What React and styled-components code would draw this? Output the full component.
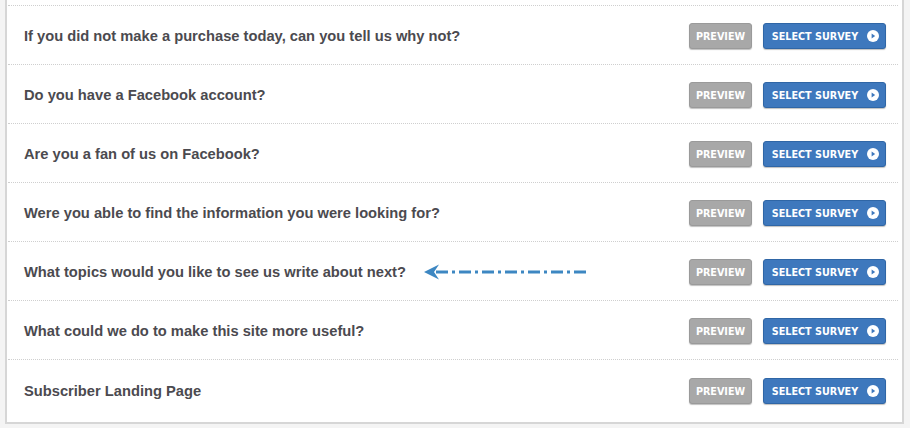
import styled, { createGlobalStyle } from "styled-components";

const GlobalStyle = createGlobalStyle`
  html, body {
    margin: 0;
    padding: 0;
    background: #f4f4f4;
    font-family: "Liberation Sans", Arial, sans-serif;
  }
`;

const Page = styled.div`
  width: 910px;
  height: 428px;
  overflow: hidden;
  padding-left: 5px;
  box-sizing: border-box;
`;

const Panel = styled.div`
  width: 899px;
  box-sizing: border-box;
  background: #fff;
  border: 2px solid #d6d6d6;
  border-top: none;
  padding: 5px 0 2px;
`;

const Row = styled.div`
  display: flex;
  align-items: center;
  height: 59px;
  border-top: 1px dotted #cfcfcf;
  margin: 0 4px 0 1px;
  padding: 0 12px 0 16px;
  box-sizing: border-box;
  ${(p) => p.$last && "height: 61px;"}
`;

const Title = styled.div`
  flex: 1;
  display: flex;
  align-items: center;
  gap: 18px;
  font-size: 14.7px;
  font-weight: bold;
  color: #4b4a4f;
  padding-top: 1px;
`;

const Actions = styled.div`
  display: flex;
  gap: 11px;
  padding-top: 2px;
`;

const Button = styled.button`
  display: flex;
  align-items: center;
  justify-content: center;
  gap: 9px;
  height: 26px;
  width: ${(p) => (p.$primary ? "123px" : "63px")};
  padding: 0 0 0 ${(p) => (p.$primary ? "2px" : "0")};
  border-radius: 3px;
  border: 1px solid ${(p) => (p.$primary ? "#2f66a6" : "#9a9a9a")};
  background: ${(p) => (p.$primary ? "#3e78bd" : "#a8a8a8")};
  color: #fff;
  font-family: "DejaVu Sans", "Liberation Sans", sans-serif;
  font-stretch: condensed;
  font-weight: bold;
  font-size: 10.7px;
  text-transform: uppercase;
  box-shadow: 0 1px 1px rgba(0, 0, 0, 0.25);
  cursor: pointer;
`;

const surveys = [
  "If you did not make a purchase today, can you tell us why not?",
  "Do you have a Facebook account?",
  "Are you a fan of us on Facebook?",
  "Were you able to find the information you were looking for?",
  "What topics would you like to see us write about next?",
  "What could we do to make this site more useful?",
  "Subscriber Landing Page",
];

function PlayCircle() {
  return (
    <svg width="12" height="12" viewBox="0 0 12 12">
      <circle cx="6" cy="6" r="6" fill="#fff" />
      <path d="M4.6 3.4 L8.2 6 L4.6 8.6 Z" fill="#3e78bd" />
    </svg>
  );
}

function DashArrow() {
  return (
    <svg width="164" height="18" viewBox="0 0 164 18">
      <path
        d="M12 9 H162"
        stroke="#3d87c2"
        strokeWidth="3"
        strokeDasharray="12 4 3 4"
      />
      <path d="M0 9 L15 1.5 L10 9 L15 16.5 Z" fill="#3d87c2" />
    </svg>
  );
}

export default function App() {
  return (
    <Page>
      <GlobalStyle />
      <Panel>
        {surveys.map((s, i) => (
          <Row key={s} $last={i === surveys.length - 1}>
            <Title>
              {s}
              {i === 4 && <DashArrow />}
            </Title>
            <Actions>
              <Button>Preview</Button>
              <Button $primary>
                Select Survey <PlayCircle />
              </Button>
            </Actions>
          </Row>
        ))}
      </Panel>
    </Page>
  );
}
